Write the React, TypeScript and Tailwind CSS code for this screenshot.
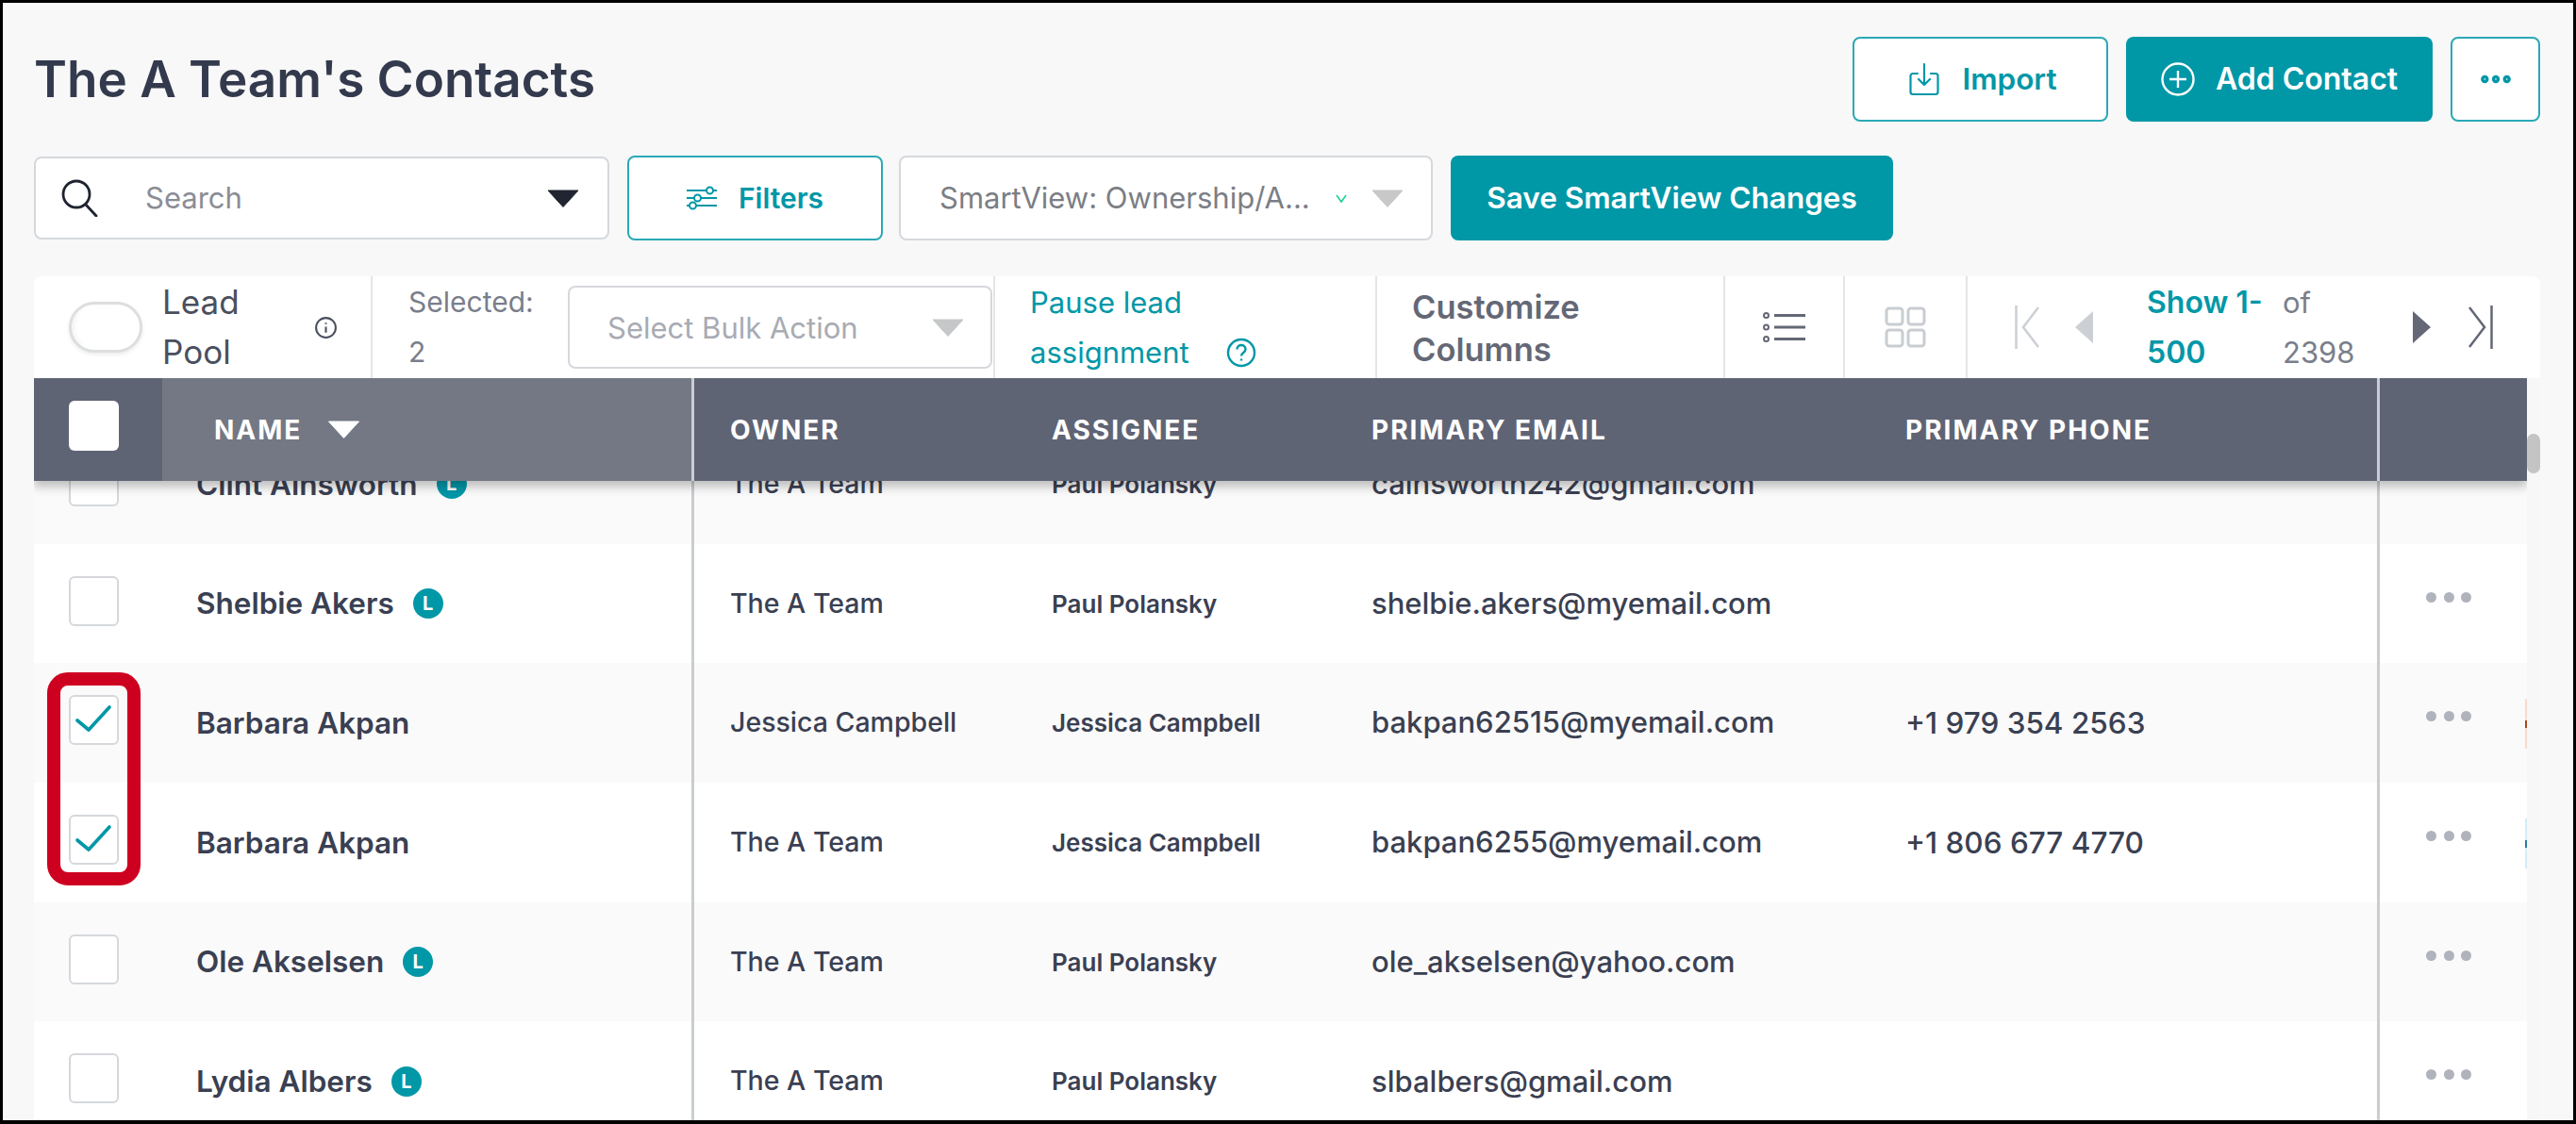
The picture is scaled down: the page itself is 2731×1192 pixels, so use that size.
import { MoreHorizontal } from 'lucide-react'

type Contact = {
  name: string
  lead: boolean
  owner: string
  assignee: string
  email: string
  phone: string
  checked?: boolean
  sliver?: string
  spot?: string
}

const contacts: Contact[] = [
  { name: 'Clint Ainsworth', lead: true, owner: 'The A Team', assignee: 'Paul Polansky', email: 'cainsworth242@gmail.com', phone: '' },
  { name: 'Shelbie Akers', lead: true, owner: 'The A Team', assignee: 'Paul Polansky', email: 'shelbie.akers@myemail.com', phone: '' },
  { name: 'Barbara Akpan', lead: false, owner: 'Jessica Campbell', assignee: 'Jessica Campbell', email: 'bakpan62515@myemail.com', phone: '+1 979 354 2563', checked: true, sliver: 'bg-[#f8dccd]', spot: 'bg-[#a8481c]' },
  { name: 'Barbara Akpan', lead: false, owner: 'The A Team', assignee: 'Jessica Campbell', email: 'bakpan6255@myemail.com', phone: '+1 806 677 4770', checked: true, sliver: 'bg-[#d3edf7]', spot: 'bg-[#2a7f9c]' },
  { name: 'Ole Akselsen', lead: true, owner: 'The A Team', assignee: 'Paul Polansky', email: 'ole_akselsen@yahoo.com', phone: '' },
  { name: 'Lydia Albers', lead: true, owner: 'The A Team', assignee: 'Paul Polansky', email: 'slbalbers@gmail.com', phone: '' },
]

function Triangle({ className }: { className: string }) {
  return (
    <svg viewBox="0 0 34 19" className={className} fill="currentColor">
      <path d="M1 1h32L17 18.5z" stroke="currentColor" strokeLinejoin="round" />
    </svg>
  )
}

function Checkbox({ checked }: { checked?: boolean }) {
  return (
    <div className="h-[53px] w-[53px] rounded-[6px] border-2 border-[#d5d8dc] bg-white">
      {checked && (
        <svg viewBox="0 0 49 49" className="h-full w-full" fill="none" stroke="#0097a7" strokeWidth="3.6" strokeLinecap="round" strokeLinejoin="round">
          <path d="M7 25l12 10L41 11" />
        </svg>
      )}
    </div>
  )
}

function Row({ contact, index }: { contact: Contact; index: number }) {
  return (
    <div className={`grid h-[126.7px] shrink-0 grid-cols-[136px_561px_344px_339px_566px_538px_159px] text-[#3a4052] ${index % 2 === 0 ? 'bg-[#fafafa]' : 'bg-white'}`}>
      <div className="pl-[37px] pt-[34px]">
        <Checkbox checked={contact.checked} />
      </div>
      <div className="flex items-center gap-[20px] pl-[36px] text-[31.5px] font-semibold">
        <span>{contact.name}</span>
        {contact.lead && (
          <span className="flex h-[32px] w-[32px] items-center justify-center rounded-full bg-[#0097a7] text-[20px] font-bold text-white">L</span>
        )}
      </div>
      <div className="flex items-center border-l-[3px] border-[#c9cdd2] pl-[38px] text-[28.5px] font-medium">{contact.owner}</div>
      <div className="flex items-center pl-[38px] text-[26px] font-semibold">{contact.assignee}</div>
      <div className="flex items-center pl-[38px] text-[31px] font-medium">{contact.email}</div>
      <div className="flex items-center pl-[38px] text-[31.5px] font-medium">{contact.phone}</div>
      <div className="relative border-l-[3px] border-[#c9cdd2]">
        {index > 0 && (
          <div className="flex justify-center gap-[7.5px] pr-[10px] pt-[51px]">
            <span className="h-[11px] w-[11px] rounded-full bg-[#b0b3bc]" />
            <span className="h-[11px] w-[11px] rounded-full bg-[#b0b3bc]" />
            <span className="h-[11px] w-[11px] rounded-full bg-[#b0b3bc]" />
          </div>
        )}
        {contact.sliver && (
          <span className={`absolute right-0 top-[38px] flex h-[53px] w-[2px] items-center ${contact.sliver}`}>
            <span className={`h-[8px] w-[2px] ${contact.spot}`} />
          </span>
        )}
      </div>
    </div>
  )
}

function Toolbar() {
  return (
    <div className="flex h-[108px] shrink-0 rounded-t-[8px] bg-white text-[31px] leading-[53px] text-[#7a7e8a]">
      <div className="flex w-[359px] items-center border-r-2 border-[#e3e5e8] pl-[37px]">
        <div className="h-[54px] w-[78px] rounded-full border-[3px] border-[#dcdedf] bg-white shadow-[inset_8px_0_6px_-6px_rgba(0,0,0,0.06),0_2px_4px_rgba(0,0,0,0.08)]" />
        <div className="ml-[21px] w-[161px] text-[35px] text-[#4a4f5e]">Lead<br />Pool</div>
        <svg viewBox="0 0 24 24" className="h-[25px] w-[25px]" fill="none" stroke="#4a4f5e" strokeWidth="2">
          <circle cx="12" cy="12" r="10" />
          <path d="M12 11v6M12 7v1.5" />
        </svg>
      </div>
      <div className="flex w-[660px] items-center border-r-2 border-[#e3e5e8] pl-[38px]">
        <div className="w-[169px] text-[30px]">Selected:<br />2</div>
        <div className="flex h-[88px] w-[450px] items-center justify-between rounded-[8px] border-2 border-[#d5d8dc] pl-[40px] pr-[28px] text-[#a8abb3]">
          <span>Select Bulk Action</span>
          <Triangle className="h-[19px] w-[34px] text-[#c6c7c9]" />
        </div>
      </div>
      <div className="flex w-[405px] items-center border-r-2 border-[#e3e5e8] pl-[37px] text-[#0097a7]">
        <div>
          Pause lead
          <div className="flex items-center gap-[39px]">
            <span>assignment</span>
            <svg viewBox="0 0 32 32" className="h-[32px] w-[32px]" fill="none" stroke="#0097a7" strokeWidth="2.4">
              <circle cx="16" cy="16" r="14" />
              <path d="M11.5 12.5c0-6 9-6 9 0 0 3.5-4.5 3.5-4.5 7M16 22.5v2" />
            </svg>
          </div>
        </div>
      </div>
      <div className="flex w-[369px] items-center border-r-2 border-[#e3e5e8] pl-[37px] pt-[2px] text-[34.5px] font-semibold leading-[45px] text-[#646876]">
        Customize<br />Columns
      </div>
      <div className="flex w-[127px] items-center justify-center border-r-2 border-[#e3e5e8]">
        <svg viewBox="0 0 46 32" className="h-[32px] w-[46px]" fill="none" stroke="#646876">
          <circle cx="3.5" cy="3.5" r="2.5" strokeWidth="2" />
          <circle cx="3.5" cy="16" r="2.5" strokeWidth="2" />
          <circle cx="3.5" cy="28.5" r="2.5" strokeWidth="2" />
          <path d="M12 3.5h33M12 16h33M12 28.5h33" strokeWidth="3" />
        </svg>
      </div>
      <div className="flex w-[130px] items-center justify-center border-r-2 border-[#e3e5e8]">
        <svg viewBox="0 0 44 44" className="h-[44px] w-[44px]" fill="none" stroke="#c9cdd2" strokeWidth="3">
          <rect x="2" y="2" width="17" height="17" rx="3" />
          <rect x="25" y="2" width="17" height="17" rx="3" />
          <rect x="2" y="25" width="17" height="17" rx="3" />
          <rect x="25" y="25" width="17" height="17" rx="3" />
        </svg>
      </div>
      <div className="flex flex-1 items-center pl-[50px]">
        <svg viewBox="0 0 26 46" className="h-[46px] w-[26px]" fill="none" stroke="#ccd0d5" strokeWidth="2.5">
          <path d="M1.5 0v46M25 2L9 23l16 21" />
        </svg>
        <svg viewBox="0 0 19 34" className="ml-[38px] h-[34px] w-[19px]" fill="#ccd0d5">
          <path d="M19 0v34L0 17z" />
        </svg>
        <div className="ml-[57px] w-[144px] text-[32px] font-semibold text-[#0097a7]">Show 1-<br />500</div>
        <div className="w-[138px] text-[#7a7e8a]">of<br />2398</div>
        <svg viewBox="0 0 19 34" className="h-[34px] w-[19px]" fill="#646876">
          <path d="M0 0v34l19-17z" />
        </svg>
        <svg viewBox="0 0 26 46" className="ml-[40px] h-[46px] w-[26px]" fill="none" stroke="#646876" strokeWidth="2.5">
          <path d="M24.5 0v46M1 2l16 21L1 44" />
        </svg>
      </div>
    </div>
  )
}

export default function App() {
  return (
    <div className="relative flex h-[1192px] w-[2731px] flex-col overflow-hidden border-x-[3px] border-b-[4px] border-t-[3px] border-black bg-[#f8f8f8] pl-[33px] pr-[35px] pt-[36px] font-['Inter',sans-serif]">
      <div className="flex h-[90px] shrink-0 items-center justify-between">
        <h1 className="pt-[2px] text-[53px] font-semibold text-[#343a4d]">The A Team's Contacts</h1>
        <div className="flex gap-[19px]">
          <button className="flex h-[90px] w-[271px] items-center justify-center gap-[24px] rounded-[8px] border-2 border-[#2aa9b6] bg-white pl-[6px] text-[31.5px] font-semibold text-[#0097a7]">
            <svg viewBox="0 0 32 36" className="h-[36px] w-[32px]" fill="none" stroke="#0097a7" strokeWidth="2.2" strokeLinecap="round" strokeLinejoin="round">
              <path d="M9 12H4a2.5 2.5 0 0 0-2.5 2.5v17A2.5 2.5 0 0 0 4 34h24a2.5 2.5 0 0 0 2.5-2.5v-17A2.5 2.5 0 0 0 28 12h-5M16 2v22M10 18l6 6 6-6" />
            </svg>
            Import
          </button>
          <button className="flex h-[90px] w-[325px] items-center justify-center gap-[22px] rounded-[8px] bg-[#0097a7] text-[32px] font-semibold text-white">
            <svg viewBox="0 0 36 36" className="h-[36px] w-[36px]" fill="none" stroke="white" strokeWidth="2.4">
              <circle cx="18" cy="18" r="16.5" />
              <path d="M18 9v18M9 18h18" />
            </svg>
            Add Contact
          </button>
          <button className="flex h-[90px] w-[95px] items-center justify-center rounded-[8px] border-2 border-[#2aa9b6] bg-white text-[#0097a7]">
            <MoreHorizontal className="h-[40px] w-[40px]" strokeWidth={3} />
          </button>
        </div>
      </div>

      <div className="mt-[36px] flex h-[90px] shrink-0 items-center">
        <div className="flex h-[88px] w-[610px] items-center rounded-[8px] border-2 border-[#d5d8dc] bg-white pl-[26px] pr-[30px]">
          <svg viewBox="0 0 40 40" className="h-[40px] w-[40px]" fill="none" stroke="#1f2430" strokeWidth="2.8" strokeLinecap="round">
            <circle cx="17" cy="16" r="14" />
            <path d="M27 27l11 12" />
          </svg>
          <span className="ml-[50px] flex-1 text-[31px] text-[#8a8d96]">Search</span>
          <Triangle className="h-[19px] w-[34px] text-[#202531]" />
        </div>
        <button className="ml-[19px] flex h-[90px] w-[271px] items-center justify-center gap-[23px] rounded-[8px] border-2 border-[#2aa9b6] bg-white text-[30px] font-semibold text-[#0097a7]">
          <svg viewBox="0 0 32 30" className="h-[30px] w-[32px]" fill="none" stroke="#0097a7" strokeWidth="2">
            <path d="M0 7h21M28 7h4M0 15h8M15 15h17M0 23h3M10 23h22" />
            <circle cx="24.5" cy="7" r="3.5" />
            <circle cx="11.5" cy="15" r="3.5" />
            <circle cx="6.5" cy="23" r="3.5" />
          </svg>
          Filters
        </button>
        <div className="ml-[17px] flex h-[90px] w-[566px] items-center rounded-[8px] border-2 border-[#d5d8dc] bg-white pl-[41px] text-[31px] text-[#7b7e85]">
          <span className="w-[420px]">SmartView: Ownership/A...</span>
          <svg viewBox="0 0 12 12" className="h-[12px] w-[12px]" fill="none" stroke="#1fcf9a" strokeWidth="1.6">
            <path d="M1 3l5 7 5-7" />
          </svg>
          <Triangle className="ml-[26px] h-[19px] w-[34px] text-[#c8c8c8]" />
        </div>
        <button className="ml-[19px] flex h-[90px] w-[469px] items-center justify-center rounded-[8px] bg-[#0097a7] text-[31.5px] font-semibold text-white">
          Save SmartView Changes
        </button>
      </div>

      <div className="mt-[38px] flex min-h-0 flex-1 flex-col">
        <Toolbar />
        <div className="flex min-h-0 flex-1 bg-[#f7f7f7]">
          <div className="flex w-[2643px] shrink-0 flex-col overflow-hidden">
            <div className="relative z-10 grid h-[109px] shrink-0 grid-cols-[136px_561px_344px_339px_566px_538px_159px] bg-[#5f6475] text-[28px] font-bold tracking-[2px] text-white shadow-[0_6px_10px_rgba(0,0,0,0.25)]">
              <div className="pl-[37px] pt-[24px]">
                <div className="h-[53px] w-[53px] rounded-[6px] bg-white" />
              </div>
              <div className="flex items-center gap-[27px] bg-[#737884] pl-[55px]">
                NAME
                <Triangle className="h-[19px] w-[35px] text-white" />
              </div>
              <div className="flex items-center border-l-[3px] border-[#c9cdd2] pl-[38px]">OWNER</div>
              <div className="flex items-center pl-[38px]">ASSIGNEE</div>
              <div className="flex items-center pl-[38px]">PRIMARY EMAIL</div>
              <div className="flex items-center pl-[38px]">PRIMARY PHONE</div>
              <div className="border-l-[3px] border-[#c9cdd2]" />
            </div>
            <div className="-mt-[60px] flex min-h-0 flex-1 flex-col">
              {contacts.map((contact, index) => (
                <Row key={index} contact={contact} index={index} />
              ))}
            </div>
          </div>
          <div className="flex-1 pt-[59px]">
            <div className="h-[42px] rounded-full bg-[#c4c4c4]" />
          </div>
        </div>
      </div>

      <div className="pointer-events-none absolute left-[47px] top-[710px] h-[226px] w-[99px] rounded-[22px] border-[14px] border-[#ce0020]" />
    </div>
  )
}
